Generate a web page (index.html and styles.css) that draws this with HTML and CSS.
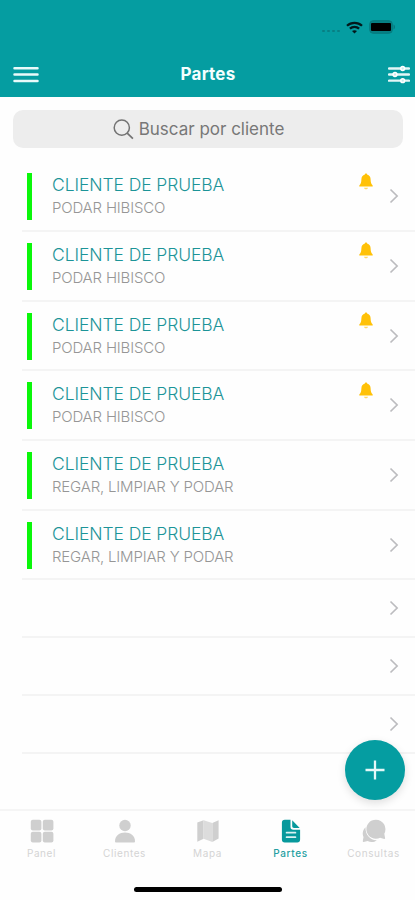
FILE: index.html
```html
<!DOCTYPE html>
<html lang="es">
<head>
<meta charset="utf-8">
<meta name="viewport" content="width=device-width, initial-scale=1">
<title>Partes</title>
<link rel="stylesheet" href="styles.css">
</head>
<body>
<svg class="defs" width="0" height="0" aria-hidden="true">
  <symbol id="bell" viewBox="0 0 14 17"><path d="M7 .5C7.8.5 8.1 1 8.1 1.500c2.3.6 3.4 2.3 3.5 4.8.1 3.2.5 4.7 2.1 6.2v1H.3v-1c1.600-1.500 2-3 2.100-6.200C2.500 3.800 3.600 2.100 5.900 1.500 5.900 1 6.200.5 7 .5z" fill="#ffc107"/><path d="M5 14.700h4c-.3 1-1 1.600-2 1.600s-1.700-.6-2-1.600z" fill="#ffd968"/></symbol>
  <symbol id="chevron" viewBox="0 0 10 16"><path d="M1.500 1.500 8.100 8l-6.600 6.500" fill="none" stroke="#bcbcbf" stroke-width="1.700"/></symbol>
</svg>
<div class="screen">
  <header class="header">
    <div class="status">
      <span class="signal"><i></i><i></i><i></i><i></i></span>
      <svg class="wifi" width="17" height="13" viewBox="0 0 17 13"><path d="M1 4.800C5.200.8 11.800.8 16 4.800M3.900 7.600c2.600-2.400 6.600-2.400 9.200 0" fill="none" stroke="#03191b" stroke-width="2.200"/><path d="M8.500 12.600 6 10.100c1.400-1.300 3.600-1.300 5 0z" fill="#03191b"/></svg>
      <svg class="battery" width="27" height="14" viewBox="0 0 27 14"><rect x=".7" y=".7" width="22.600" height="12.600" rx="3.500" fill="#078084" stroke="#067a7e"/><rect x="2" y="3" width="20" height="8" rx="1" fill="#000"/><path d="M24.500 4.500c2 .8 2 4.200 0 5z" fill="#067a7e"/></svg>
    </div>
    <div class="navbar">
      <svg width="26" height="17" viewBox="0 0 26 17"><path d="M1.500 2.300h23M1.500 8.600h23M1.500 14.900h23" stroke="#e9fafa" stroke-width="2.500" stroke-linecap="round"/></svg>
      <h1>Partes</h1>
      <svg width="22" height="19" viewBox="0 0 22 19"><path d="M1 3.500h20M1 9.500h20M1 15.700h20" stroke="#e2f6f6" stroke-width="2.300" stroke-linecap="round"/><g fill="#c9ecec" stroke="#fff" stroke-width="1.500"><circle cx="14.700" cy="3.500" r="1.900"/><circle cx="7" cy="9.500" r="1.900"/><circle cx="14.700" cy="15.700" r="1.900"/></g></svg>
    </div>
  </header>

  <div class="search">
    <svg width="21" height="21" viewBox="0 0 21 21"><circle cx="8.800" cy="8.700" r="7.600" fill="none" stroke="#737373" stroke-width="1.500"/><path d="m14.200 14.200 5.700 5.500" stroke="#737373" stroke-width="1.700"/></svg>
    <span>Buscar por cliente</span>
  </div>

  <main class="list">
    <article class="row"><div class="bar"></div><div class="text"><h2>CLIENTE DE PRUEBA</h2><p>PODAR HIBISCO</p></div><svg class="bell"><use href="#bell"/></svg><svg class="chev"><use href="#chevron"/></svg></article>
    <article class="row"><div class="bar"></div><div class="text"><h2>CLIENTE DE PRUEBA</h2><p>PODAR HIBISCO</p></div><svg class="bell"><use href="#bell"/></svg><svg class="chev"><use href="#chevron"/></svg></article>
    <article class="row"><div class="bar"></div><div class="text"><h2>CLIENTE DE PRUEBA</h2><p>PODAR HIBISCO</p></div><svg class="bell"><use href="#bell"/></svg><svg class="chev"><use href="#chevron"/></svg></article>
    <article class="row"><div class="bar"></div><div class="text"><h2>CLIENTE DE PRUEBA</h2><p>PODAR HIBISCO</p></div><svg class="bell"><use href="#bell"/></svg><svg class="chev"><use href="#chevron"/></svg></article>
    <article class="row"><div class="bar"></div><div class="text"><h2>CLIENTE DE PRUEBA</h2><p>REGAR, LIMPIAR Y PODAR</p></div><svg class="chev"><use href="#chevron"/></svg></article>
    <article class="row"><div class="bar"></div><div class="text"><h2>CLIENTE DE PRUEBA</h2><p>REGAR, LIMPIAR Y PODAR</p></div><svg class="chev"><use href="#chevron"/></svg></article>
    <article class="row empty"><svg class="chev"><use href="#chevron"/></svg></article>
    <article class="row empty"><svg class="chev"><use href="#chevron"/></svg></article>
    <article class="row empty"><svg class="chev"><use href="#chevron"/></svg></article>
  </main>

  <button class="fab" aria-label="Nuevo"><svg width="20" height="20" viewBox="0 0 20 20"><path d="M10 .5v19M.5 10h19" stroke="#e4f8f8" stroke-width="2.300"/></svg></button>

  <footer class="footer">
    <nav class="tabs">
      <div class="tab"><svg viewBox="0 0 24 24"><g fill="#cfcfcf"><rect x=".8" y=".8" width="10.600" height="10.600" rx="2"/><rect x="12.800" y=".8" width="10.600" height="10.600" rx="2"/><rect x=".8" y="12.800" width="10.600" height="10.600" rx="2"/><rect x="12.800" y="12.800" width="10.600" height="10.600" rx="2"/></g></svg><span>Panel</span></div>
      <div class="tab"><svg viewBox="0 0 24 24"><g fill="#cfcfcf"><circle cx="12" cy="6.500" r="5.700"/><path d="M2 22.500c0-5.800 4.600-8.900 10-8.900s10 3.100 10 8.900c0 .6-.4.900-1 .9H3c-.6 0-1-.3-1-.9z"/></g></svg><span>Clientes</span></div>
      <div class="tab"><svg viewBox="0 0 24 24"><path d="m1.300 3.600 6.300-2.300v18.400l-6.300 3.100zM16.300 4l6.300-2.800v18.200l-6.300 3.600z" fill="#cfcfcf"/><path d="M7.600 1.300 16.300 4v19l-8.700-3.300z" fill="#dcdcdc"/></svg><span>Mapa</span></div>
      <div class="tab active"><svg viewBox="0 0 24 24"><path d="M5.800.8h5.700v7.200c0 1.800 1 2.700 2.700 2.700h6.900v9.800c0 1.900-1 2.900-2.900 2.900H5.800c-1.900 0-2.900-1-2.900-2.900V3.700c0-1.900 1-2.900 2.900-2.900zM13.200 1.300l7.500 7.600h-5.600c-1.300 0-1.900-.6-1.900-1.900z" fill="#07999c"/><path d="M7.600 13.700h8.800M7.600 18.200h8.800" stroke="#d9f1f1" stroke-width="1.800" stroke-linecap="round"/></svg><span>Partes</span></div>
      <div class="tab"><svg viewBox="0 0 24 24"><path d="M14 .7a9.500 9.500 0 0 1 8.300 14l.8 4.300c.1.600-.3 1-.9.900l-4.100-1.200A9.500 9.500 0 1 1 14 .7z" fill="#cfcfcf"/><path d="M3.500 8.300c-3.200 3-3.200 7.100-2 9.800l-.7 3.900c-.1.600.3 1 .9.900l3.900-.8c3.200 1.500 6.700 1.200 9.300-.9-6.200.4-11.700-5-11.400-12.900z" fill="#cfcfcf"/></svg><span>Consultas</span></div>
    </nav>
    <div class="home"></div>
  </footer>
</div>
</body>
</html>
```
FILE: styles.css
```css
* { box-sizing: border-box; margin: 0; padding: 0; }
body { background: #fff; font-family: Inter, "Liberation Sans", sans-serif; }
svg { display: block; flex: none; }
.defs { position: absolute; }
.screen { position: relative; display: flex; flex-direction: column; width: 415px; height: 900px; overflow: hidden; background: #fefefe; }

.header { height: 97px; flex: none; background: #059da1; padding: 19px 5px 0 13px; }
.status { display: flex; justify-content: flex-end; align-items: center; height: 16px; padding-right: 14px; }
.signal { display: flex; gap: 2px; margin: 7px 6px 0 0; }
.signal i { width: 3px; height: 2px; border-radius: 1px; background: #087f83; }
.wifi { margin-right: 6px; }
.navbar { display: grid; grid-template-columns: 1fr auto 1fr; align-items: center; height: 34px; margin-top: 22px; }
.navbar svg:last-child { justify-self: end; }
.navbar h1 { color: #f4ffff; font-size: 17px; font-weight: 700; line-height: 22px; letter-spacing: 0.2px; margin-right: 7px; }

.search { display: flex; align-items: center; justify-content: center; gap: 5px; flex: none; height: 38px; margin: 13px 12px 0 13px; padding-right: 19px; border-radius: 10px; background: #ededed; color: #777; font-size: 17px; }

.list { margin: 14.300px 0 0 22px; }
.row { display: flex; height: 69.7px; border-bottom: 2px solid #f4f4f4; }
.bar { width: 5px; height: 47px; margin: 11px 0 0 5px; background: #0bf70b; }
.text { margin: 11px 0 0 20px; flex: 1; white-space: nowrap; }
.text h2 { color: #1c9498; font-size: 17.500px; font-weight: 300; line-height: 23px; letter-spacing: -0.09px; }
.text p { color: #969696; font-size: 15px; font-weight: 300; line-height: 22px; margin-top: 1px; letter-spacing: -0.18px; }
.bell { width: 14px; height: 17px; margin: 10.500px 16px 0 0; }
.chev { width: 10px; height: 16px; margin: 26px 16px 0 0; }
.empty { height: 58px; justify-content: flex-end; }
.empty .chev { margin-top: 19.700px; }

.fab { position: absolute; left: 345px; top: 740px; display: flex; align-items: center; justify-content: center; width: 60px; height: 60px; border: 0; border-radius: 50%; background: #059da1; box-shadow: 0 3px 8px rgba(0, 0, 0, .13); }

.footer { display: flex; flex-direction: column; flex: none; height: 91px; margin-top: auto; border-top: 2px solid #f5f5f5; }
.tabs { display: grid; grid-template-columns: repeat(5, 1fr); }
.tab { display: flex; flex-direction: column; align-items: center; padding-top: 8px; color: #d4d4d4; font-size: 10px; line-height: 14px; }
.tab svg { width: 24px; height: 24px; margin-bottom: 3px; }
.tab span { letter-spacing: .6px; }
.active { color: #259fa2; font-weight: 500; }
.home { width: 148px; height: 5px; margin: 27px auto 0; border-radius: 3px; background: #000; }
```
